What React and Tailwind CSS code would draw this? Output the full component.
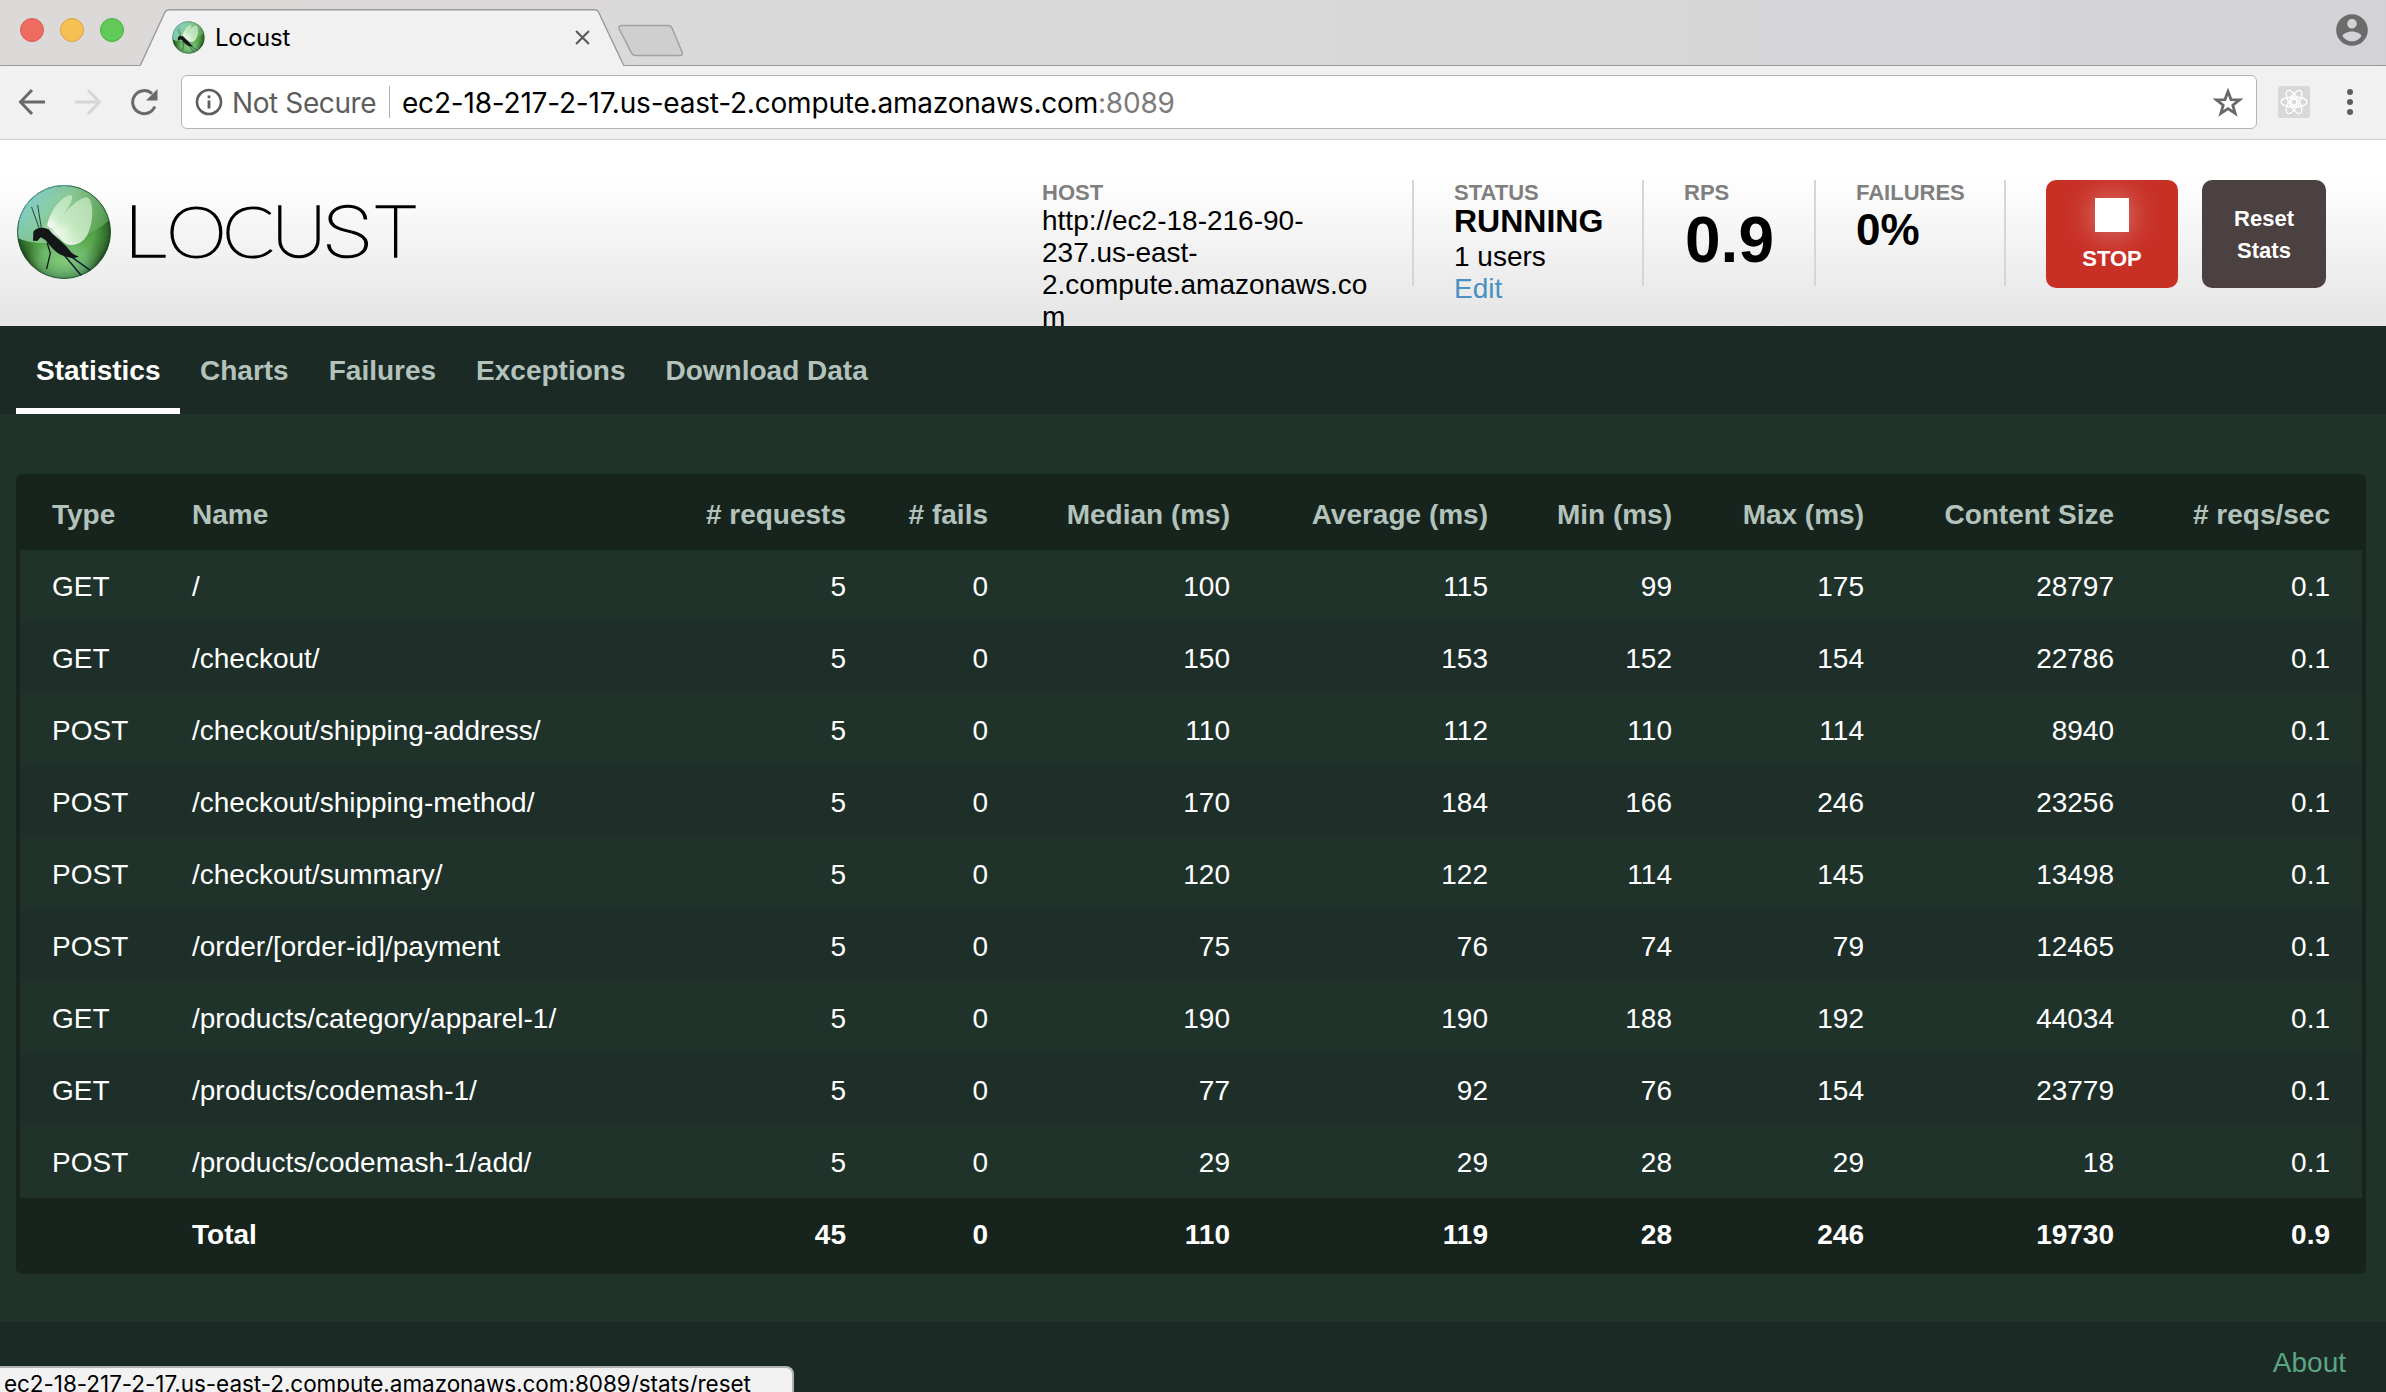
import React from "react";

const rows = [
  ["GET", "/", "5", "0", "100", "115", "99", "175", "28797", "0.1"],
  ["GET", "/checkout/", "5", "0", "150", "153", "152", "154", "22786", "0.1"],
  ["POST", "/checkout/shipping-address/", "5", "0", "110", "112", "110", "114", "8940", "0.1"],
  ["POST", "/checkout/shipping-method/", "5", "0", "170", "184", "166", "246", "23256", "0.1"],
  ["POST", "/checkout/summary/", "5", "0", "120", "122", "114", "145", "13498", "0.1"],
  ["POST", "/order/[order-id]/payment", "5", "0", "75", "76", "74", "79", "12465", "0.1"],
  ["GET", "/products/category/apparel-1/", "5", "0", "190", "190", "188", "192", "44034", "0.1"],
  ["GET", "/products/codemash-1/", "5", "0", "77", "92", "76", "154", "23779", "0.1"],
  ["POST", "/products/codemash-1/add/", "5", "0", "29", "29", "28", "29", "18", "0.1"],
];
const head = ["Type", "Name", "# requests", "# fails", "Median (ms)", "Average (ms)", "Min (ms)", "Max (ms)", "Content Size", "# reqs/sec"];
const total = ["", "Total", "45", "0", "110", "119", "28", "246", "19730", "0.9"];

function Row({ cells, className }) {
  return (
    <div className={"grid h-[72px] grid-cols-[140px_513px_205px_142px_242px_258px_184px_192px_250px_216px] items-center pt-0.5 leading-8 whitespace-nowrap " + className}>
      {cells.map((c, i) => (
        <div key={i} className={i < 2 ? "pl-8" : "pr-8 text-right"}>{c}</div>
      ))}
    </div>
  );
}

function LocustBall({ id, className }) {
  const u = (n) => `url(#${id}-${n})`;
  return (
    <svg viewBox="48 102 288 288" className={className}>
      <defs>
        <linearGradient id={`${id}-base`} x1="0.35" y1="0" x2="0.6" y2="1">
          <stop offset="0" stopColor="#86cfc4" />
          <stop offset="0.25" stopColor="#6fba7a" />
          <stop offset="0.55" stopColor="#4f9f45" />
          <stop offset="0.8" stopColor="#67b15a" />
          <stop offset="1" stopColor="#57a98c" />
        </linearGradient>
        <radialGradient id={`${id}-shade`} cx="0.5" cy="0.47" r="0.54">
          <stop offset="0.6" stopColor="#123f12" stopOpacity="0" />
          <stop offset="0.85" stopColor="#123f12" stopOpacity="0.55" />
          <stop offset="1" stopColor="#0a260c" stopOpacity="0.95" />
        </radialGradient>
        <linearGradient id={`${id}-gloss`} x1="0.1" y1="0.2" x2="1" y2="0.6">
          <stop offset="0" stopColor="#86d2d6" stopOpacity="0.95" />
          <stop offset="0.45" stopColor="#8fcd95" stopOpacity="0.85" />
          <stop offset="1" stopColor="#5fa758" stopOpacity="0.7" />
        </linearGradient>
        <radialGradient id={`${id}-glow`}>
          <stop offset="0" stopColor="#ffffff" stopOpacity="0.9" />
          <stop offset="1" stopColor="#d8f5d0" stopOpacity="0" />
        </radialGradient>
        <radialGradient id={`${id}-low`}>
          <stop offset="0" stopColor="#84cc78" stopOpacity="0.95" />
          <stop offset="0.6" stopColor="#78c47c" stopOpacity="0.6" />
          <stop offset="1" stopColor="#67b15a" stopOpacity="0" />
        </radialGradient>
        <linearGradient id={`${id}-wing`} x1="0.1" y1="1" x2="0.7" y2="0">
          <stop offset="0" stopColor="#ffffff" stopOpacity="0.95" />
          <stop offset="0.4" stopColor="#dcf4d6" stopOpacity="0.8" />
          <stop offset="1" stopColor="#d3f0cf" stopOpacity="0.65" />
        </linearGradient>
        <clipPath id={`${id}-clip`}><circle cx="192" cy="246" r="140" /></clipPath>
      </defs>
      <circle cx="192" cy="246" r="140" fill={u("base")} />
      <g clipPath={u("clip")}>
        <circle cx="192" cy="246" r="140" fill={u("shade")} />
        <ellipse cx="190" cy="335" rx="115" ry="85" fill={u("low")} />
        <path d="M50 262C85 285 230 300 334 205V100H50Z" fill={u("gloss")} />
        <ellipse cx="175" cy="245" rx="55" ry="38" fill={u("glow")} />
        <path d="M142 228C146 190 182 140 210 136C224 136 214 160 200 180C186 200 170 220 158 236Z" fill={u("wing")} />
        <path d="M158 238C180 200 230 145 258 142C282 142 282 215 262 255C245 285 215 292 192 278Z" fill={u("wing")} />
        <g fill="none" stroke="#12191c" strokeLinecap="round">
          <path d="M118 236L95 172M124 234L113 166" strokeWidth="3" stroke="#29443b" />
          <path d="M142 280L151 310L140 356" strokeWidth="4" />
          <path d="M190 312L243 376M208 316L272 362" strokeWidth="4.5" stroke="#15203a" />
        </g>
        <path d="M99 272L100 245C108 232 130 230 146 238C158 256 190 276 208 300C216 312 226 316 236 319C228 327 204 324 186 316C168 308 150 288 136 270L122 262L112 273Z" fill="#131718" />
      </g>
      <circle cx="192" cy="246" r="139.5" fill="none" stroke="#1c4f2c" strokeWidth="2.5" />
      <path d="M57 212A139.500 139.500 0 0 1 215 108" fill="none" stroke="#58a9a6" strokeWidth="3" />
    </svg>
  );
}

function BrowserChrome() {
  return (
    <div className="font-[Inter,sans-serif]">
      <div className="flex h-[66px] items-end bg-linear-to-r from-[#dcd9d8] via-[#d9d9d9] to-[#d3d3d7] shadow-[inset_0_-1px_0_#9b9899]">
        <div className="flex h-[66px] w-[140px] shrink-0 gap-4 pt-[18px] pl-5">
          <div className="size-6 rounded-full border border-[#d85f55] bg-[#ee6b60]" />
          <div className="size-6 rounded-full border border-[#dba345] bg-[#f6c152]" />
          <div className="size-6 rounded-full border border-[#50ac44] bg-[#61c956]" />
        </div>
        <div className="relative flex h-[57px] w-[484px] shrink-0 items-center">
          <svg viewBox="0 0 484 57" className="absolute inset-0 h-[57px] w-[484px]">
            <path d="M0 57L1 55.500L25 3Q26.500 0.700 29 0.700H455Q457.500 0.700 458.500 3L483 55.500L484 57Z" fill="#f1f1f1" />
            <path d="M0 56.500L1 55L25 3Q26.500 0.700 29 0.700H455Q457.500 0.700 458.500 3L483 55L484 56.500" fill="none" stroke="#9b9899" strokeWidth="1.400" />
          </svg>
          <LocustBall id="fav" className="relative ml-8 size-[33px]" />
          <span className="relative ml-[10px] text-[24px] leading-8 tracking-[-0.2px] text-black">Locust</span>
          <svg viewBox="0 0 14 14" className="relative mr-[34px] ml-auto size-[15px]">
            <path d="M1 1L13 13M13 1L1 13" stroke="#5a5a5a" strokeWidth="2" />
          </svg>
        </div>
        <svg viewBox="0 0 70 34" className="-ml-[8px] mb-[8px] h-[34px] w-[70px]">
          <path d="M6 1.500H52Q55 1.500 56 4L66 28Q67.500 31.500 64 31.500H20Q16.500 31.500 15.500 29L3 4.500Q2 1.500 6 1.500Z" fill="#cfcfcf" stroke="#a3a1a1" strokeWidth="1.500" />
        </svg>
        <svg viewBox="0 0 24 24" className="mr-[15px] mb-[17px] ml-auto size-[38px]" fill="#6b6b6b">
          <path d="M12 2C6.480 2 2 6.480 2 12s4.480 10 10 10 10-4.480 10-10S17.520 2 12 2zm0 3c1.660 0 3 1.340 3 3s-1.340 3-3 3-3-1.340-3-3 1.340-3 3-3zm0 14.200c-2.500 0-4.710-1.280-6-3.220.030-1.990 4-3.080 6-3.080 1.990 0 5.970 1.090 6 3.080-1.290 1.940-3.500 3.220-6 3.220z" />
        </svg>
      </div>
      <div className="flex h-[74px] items-center border-b border-[#cfcfcf] bg-[#f1f1f1] pb-px">
        <svg viewBox="0 0 28 28" className="ml-[18px] size-7" fill="none" stroke="#696969" strokeWidth="3">
          <path d="M27 14H3M14 2L2.500 14L14 26" />
        </svg>
        <svg viewBox="0 0 28 28" className="ml-7 size-7" fill="none" stroke="#d6d6d6" strokeWidth="3">
          <path d="M1 14H25M14 2L25.500 14L14 26" />
        </svg>
        <svg viewBox="0 0 28 28" className="ml-7 size-7">
          <path d="M24.800 18.500A11.500 11.500 0 1 1 22 5.700" fill="none" stroke="#696969" strokeWidth="3" />
          <path d="M27.500 1V12.500H16Z" fill="#696969" />
        </svg>
        <div className="ml-[23px] flex h-[54px] w-[2076px] items-center rounded-[6px] border border-[#b5b5b5] bg-white">
          <svg viewBox="0 0 28 28" className="ml-[13px] size-7" fill="none" stroke="#5d5d5d">
            <circle cx="14" cy="14" r="12" strokeWidth="2.600" />
            <path d="M14 12.500V20.500M14 7.500V10.300" strokeWidth="2.800" />
          </svg>
          <span className="mt-0.5 ml-[9px] w-[144px] text-[28px] leading-9 tracking-[-0.4px] whitespace-nowrap text-[#5d5d5d]">Not Secure</span>
          <div className="ml-[13px] h-8 w-px bg-[#b0b0b0]" />
          <span className="mt-0.5 ml-[12px] text-[28px] leading-9 tracking-[-0.2px] whitespace-nowrap text-black">
            ec2-18-217-2-17.us-east-2.compute.amazonaws.com<span className="text-[#7c7c7c]">:8089</span>
          </span>
          <svg viewBox="0 0 30 29" className="mr-[13px] ml-auto h-[29px] w-[30px]">
            <path d="M15 3.500L18 11.600L26.500 11.900L19.800 17.200L22.200 25.500L15 20.700L7.800 25.500L10.200 17.200L3.500 11.900L12 11.600Z" fill="none" stroke="#696969" strokeWidth="2.800" />
          </svg>
        </div>
        <div className="ml-[21px] flex size-8 items-center justify-center rounded-[3px] bg-[#d8d8d8]">
          <svg viewBox="0 0 28 28" className="size-7" fill="none" stroke="#ffffff" strokeWidth="1.300">
            <ellipse cx="14" cy="14" rx="13" ry="5" />
            <ellipse cx="14" cy="14" rx="13" ry="5" transform="rotate(60 14 14)" />
            <ellipse cx="14" cy="14" rx="13" ry="5" transform="rotate(120 14 14)" />
            <circle cx="14" cy="14" r="3.200" strokeWidth="1.800" />
          </svg>
        </div>
        <div className="ml-[37px] flex flex-col gap-1">
          <div className="size-1.5 rounded-full bg-[#5d5d5d]" />
          <div className="size-1.5 rounded-full bg-[#5d5d5d]" />
          <div className="size-1.5 rounded-full bg-[#5d5d5d]" />
        </div>
      </div>
    </div>
  );
}

function Label({ children }) {
  return <div className="text-[22px] leading-[25px] font-bold text-[#7f7f7f]">{children}</div>;
}

const inter = { fontFamily: "Inter, sans-serif", fontSize: 70, strokeWidth: 1.4, lengthAdjust: "spacingAndGlyphs" };
const lato = { fontFamily: "Lato, sans-serif", fontSize: 71, strokeWidth: 2.1, lengthAdjust: "spacingAndGlyphs" };

function Wordmark() {
  return (
    <svg viewBox="117 190 310 80" className="mt-[50px] ml-[5px] h-20 w-[310px] overflow-visible">
      <text y="256.600" fontWeight="100" fill="#000" stroke="#000">
        <tspan x="123.500" textLength="46.500" {...inter}>L</tspan>
        <tspan x="166.200" textLength="60.300" {...lato}>O</tspan>
        <tspan x="222.300" textLength="51.900" {...lato}>C</tspan>
        <tspan x="271.500" textLength="54.900" {...inter}>U</tspan>
        <tspan x="321.300" textLength="52.600" {...inter}>S</tspan>
        <tspan x="371.400" textLength="48.300" {...inter}>T</tspan>
      </text>
    </svg>
  );
}

function Header() {
  return (
    <header className="flex h-[186px] items-start overflow-hidden bg-linear-to-b from-white from-20% to-[#e6e6e6] to-95% whitespace-nowrap text-black">
      <LocustBall id="logo" className="mt-11 ml-4 size-24" />
      <Wordmark />
      <div className="mt-10 ml-auto flex h-[106px] pr-[60px]">
        <div className="w-[372px] border-r-2 border-[#d6d6d6]">
          <Label>HOST</Label>
          <div className="text-[28px] leading-8">http://ec2-18-216-90-<br />237.us-east-<br />2.compute.amazonaws.co<br />m</div>
        </div>
        <div className="w-[230px] border-r-2 border-[#d6d6d6] pl-[40px]">
          <Label>STATUS</Label>
          <div className="pb-1 text-[32px] leading-8 font-bold">RUNNING</div>
          <div className="text-[28px] leading-8">1 users</div>
          <div className="text-[28px] leading-8 text-[#4a90c2]">Edit</div>
        </div>
        <div className="w-[172px] border-r-2 border-[#d6d6d6] pl-[40px]">
          <Label>RPS</Label>
          <div className="pl-px text-[64px] leading-[71px] font-bold">0.9</div>
        </div>
        <div className="w-[190px] border-r-2 border-[#d6d6d6] pl-[40px]">
          <Label>FAILURES</Label>
          <div className="text-[44px] leading-[50px] font-bold">0%</div>
        </div>
        <div className="ml-10 flex h-[108px] w-[132px] flex-col items-center rounded-[10px] bg-[#c83026] pt-[18px] text-[22px] font-bold text-white">
          <div className="size-[34px] bg-white shadow-[0_0_30px_rgba(255,255,255,0.45)]" />
          <div className="mt-[11px] leading-8">STOP</div>
        </div>
        <div className="ml-6 flex h-[108px] w-[124px] items-center justify-center rounded-[10px] bg-[#4b4140] pt-0.5 text-center text-[22px] leading-8 font-bold text-white">
          Reset<br />Stats
        </div>
      </div>
    </header>
  );
}

export default function App() {
  return (
    <div className="relative flex h-[1392px] w-[2386px] flex-col overflow-hidden bg-[#1f332b] font-['Liberation_Sans',Arial,sans-serif]">
      <BrowserChrome />
      <Header />
      <nav className="flex h-[88px] bg-[#1b2a24] pl-4 text-[28px] leading-8 font-bold text-[#b3c3bc]">
        <div className="w-[164px] border-b-[6px] border-white pt-[29px] pl-5 text-white">Statistics</div>
        <div className="px-5 pt-[29px]">Charts</div>
        <div className="px-5 pt-[29px]">Failures</div>
        <div className="px-5 pt-[29px]">Exceptions</div>
        <div className="px-5 pt-[29px]">Download Data</div>
      </nav>
      <main className="mt-[60px] ml-4 w-[2350px] rounded-[6px] border-4 border-[#17241e] bg-[#17241e] text-[28px] text-white">
        <Row cells={head} className="font-bold text-[#b3c3bc]" />
        {rows.map((r, i) => (
          <Row key={i} cells={r} className={i % 2 ? "bg-[#1d2f28]" : "bg-[#1f332b]"} />
        ))}
        <Row cells={total} className="font-bold" />
      </main>
      <footer className="mt-12 flex flex-1 justify-end bg-[#1b2a24] pt-[25px] pr-10 text-[28px] leading-8 text-[#5aa584]">About</footer>
      <div className="absolute bottom-0 left-0 h-[26px] w-[794px] overflow-hidden rounded-tr-[8px] border-t-2 border-r-2 border-[#b3b3b3] bg-[#f2f2f2] pl-1 font-[Inter,sans-serif] text-[22.5px] leading-[32px] tracking-[-0.05px] whitespace-nowrap text-black">
        ec2-18-217-2-17.us-east-2.compute.amazonaws.com:8089/stats/reset
      </div>
    </div>
  );
}
